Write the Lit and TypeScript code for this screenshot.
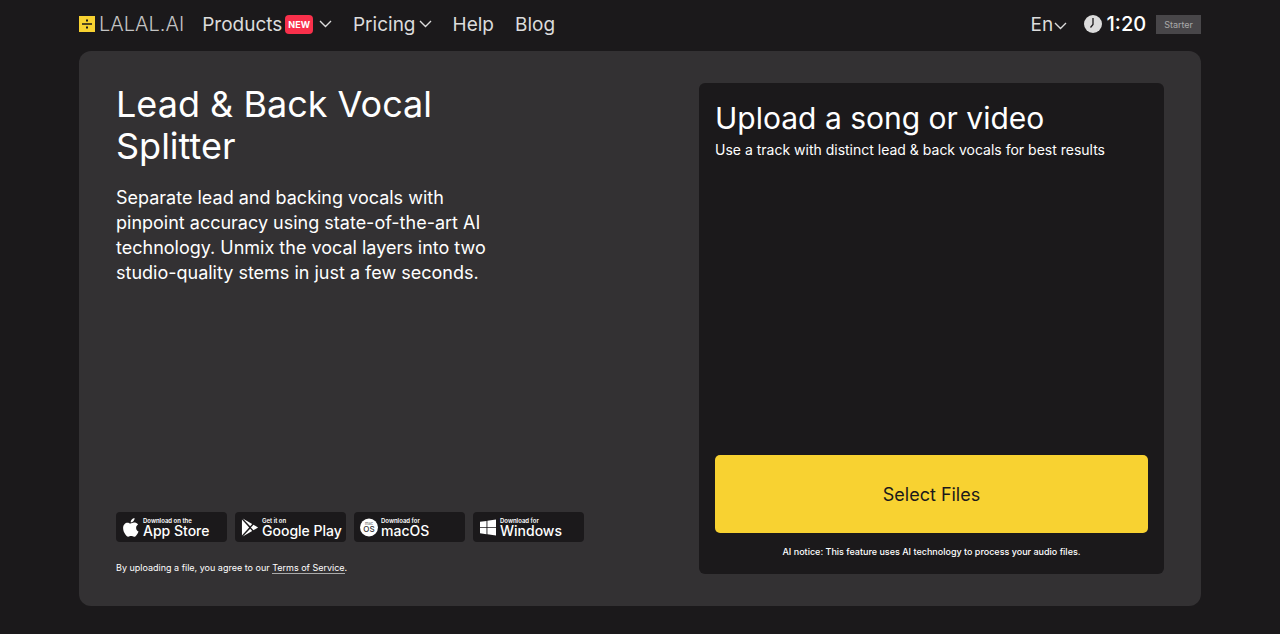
import { LitElement, html, css, svg } from "lit";
import { customElement } from "lit/decorators.js";

const chevron = html`<svg class="chevron" viewBox="0 0 13 8" aria-hidden="true"><path d="M1 1l5.5 5.5L12 1" fill="none" stroke="currentColor" stroke-width="1.4"/></svg>`;

const stores = [
  {
    small: "Download on the",
    name: "App Store",
    icon: svg`<path fill="currentColor" d="M12.2 0c.1 1.2-.3 2.300-1 3.200-.8.9-1.900 1.500-3 1.400-.1-1.100.4-2.300 1.100-3.100C10 .7 11.200.1 12.200 0zM15.900 6.900c-1.300.8-2 2-2 3.500 0 1.700.9 3 2.500 3.700-.4 1.200-1 2.300-1.800 3.400-.8 1.100-1.600 2.200-2.900 2.200-1.200 0-1.600-.7-3.100-.7-1.400 0-1.900.7-3.100.7s-2.100-1.100-2.900-2.300C.9 15 .2 12.700.2 10.500c0-3.500 2.300-5.600 4.700-5.600 1.300 0 2.300.8 3.200.8.800 0 2-.9 3.600-.9 1.700 0 3.200.7 4.200 2.100z"/>`,
    box: "0 0 17 20",
  },
  {
    small: "Get it on",
    name: "Google Play",
    icon: svg`<g fill="currentColor"><path d="M0 1.500v17l7.600-8.500z"/><path d="M.8.500l7.900 8.200 2.100-2.300zM.8 19.500l7.900-8.200 2.100 2.300z"/><path d="M12.100 7.100L9.500 10l2.600 2.900L17 10z"/></g>`,
    box: "0 0 17 20",
  },
  {
    small: "Download for",
    name: "macOS",
    icon: svg`<circle cx="9" cy="9" r="9" fill="currentColor"/><text x="9" y="6" text-anchor="middle" font-size="4" fill="#777">mac</text><text x="9" y="13" text-anchor="middle" font-size="8" font-weight="500" fill="#333">OS</text>`,
    box: "0 0 18 18",
  },
  {
    small: "Download for",
    name: "Windows",
    icon: svg`<path fill="currentColor" d="M0 2.300l6.500-.9v6.300H0zM7.400 1.300L16 0v7.700H7.400zM0 8.500h6.500v6.200L0 13.800zM7.400 8.500H16V16l-8.600-1.200z"/>`,
    box: "-1 -1 18 18",
  },
];

@customElement("app-root")
export class AppRoot extends LitElement {
  static styles = css`
    :host {
      display: block;
      box-sizing: border-box;
      min-height: 100vh;
      padding: 0 79px 28px;
      background: #1b191b;
      color: #fff;
      font-family: Inter, "Liberation Sans", sans-serif;
    }
    * { box-sizing: border-box; }
    h1, h2, p { margin: 0; font-weight: 400; }
    a { color: inherit; text-decoration: none; }
    button, select {
      margin: 0;
      padding: 0;
      border: 0;
      background: none;
      color: inherit;
      font: inherit;
      cursor: pointer;
    }
    select { appearance: none; }
    select option { color: #1b191b; }
    .header {
      display: flex;
      align-items: center;
      justify-content: space-between;
      height: 51px;
      padding-bottom: 3px;
      color: #dcdcdc;
      font-size: 19px;
    }
    .nav { display: flex; align-items: center; gap: 21px; }
    .logo {
      display: flex;
      align-items: center;
      gap: 4px;
      margin-right: -3px;
      font-size: 20px;
      font-weight: 300;
    }
    .logo svg { width: 16px; height: 16px; }
    .wordmark { color: #c4c4c4; }
    .item { display: flex; align-items: center; gap: 3px; }
    .chevron { width: 13px; height: 8px; }
    .new {
      padding: 0 3px;
      margin-right: 3px;
      border-radius: 4px;
      background: #f9304b;
      color: #fff;
      font-size: 9px;
      font-weight: 700;
      line-height: 19px;
    }
    .account { display: flex; align-items: center; }
    .lang { display: flex; align-items: center; }
    .lang .chevron { margin-top: 4px; }
    .time {
      display: flex;
      align-items: center;
      gap: 5px;
      margin: 0 10px 0 17px;
      color: #fff;
      font-size: 20px;
      font-weight: 500;
    }
    .time svg { width: 18px; height: 18px; }
    .plan {
      padding: 0 8px;
      background: #484649;
      color: #aaa;
      font-size: 9px;
      line-height: 19px;
    }
    .main {
      display: grid;
      grid-template-columns: 1fr 465px;
      gap: 36px;
      min-height: 555px;
      padding: 32px 37px;
      border-radius: 12px;
      background: #333133;
    }
    .intro { display: flex; flex-direction: column; }
    .title { max-width: 360px; font-size: 36px; line-height: 42px; }
    .lead {
      max-width: 400px;
      margin-top: 18px;
      font-size: 18px;
      line-height: 25px;
    }
    .stores { display: flex; gap: 8px; margin-top: auto; }
    .store {
      display: flex;
      align-items: center;
      gap: 3px;
      width: 111px;
      height: 30px;
      padding-left: 6px;
      border-radius: 4px;
      background: #1b191b;
      font-size: 14px;
      font-weight: 500;
      line-height: 14px;
      white-space: nowrap;
    }
    .store svg { width: 18px; height: 19px; flex: none; }
    .words { display: flex; flex-direction: column; }
    .small { font-size: 6px; font-weight: 600; line-height: 7px; }
    .terms { margin-top: 19px; font-size: 9px; line-height: 13px; }
    .link { border-bottom: 1px solid #aaa; }
    .upload {
      display: flex;
      flex-direction: column;
      padding: 16px;
      border-radius: 6px;
      background: #1b191b;
    }
    .heading { font-size: 30px; line-height: 38px; }
    .hint { font-size: 14px; line-height: 26px; }
    .select {
      height: 78px;
      margin-top: auto;
      border-radius: 5px;
      background: #f8d231;
      color: #1b191b;
      font-size: 18px;
    }
    .notice {
      margin-top: 12px;
      font-size: 9px;
      font-weight: 500;
      line-height: 13px;
      text-align: center;
    }
  `;

  render() {
    return html`
      <header class="header">
        <nav class="nav">
          <a class="logo" href="#">
            <svg viewBox="0 0 16 16" aria-hidden="true"><path fill="#f8d231" d="M0 0h16v16H0z"/><path fill="#1b191b" d="M3 7.300h10v1.500H3zM7 3.500h2v2H7zM7 10.500h2v2H7z"/></svg>
            <span class="wordmark">LALAL.AI</span>
          </a>
          <button class="item" type="button">Products<span class="new">NEW</span>${chevron}</button>
          <button class="item" type="button">Pricing${chevron}</button>
          <a href="#">Help</a>
          <a href="#">Blog</a>
        </nav>
        <div class="account">
          <label class="lang"><select aria-label="Language"><option>En</option></select>${chevron}</label>
          <span class="time">
            <svg viewBox="0 0 18 18" aria-hidden="true"><circle cx="9" cy="9" r="9" fill="#dcdcdc"/><path d="M9 3v6.500L6.500 12.500" fill="none" stroke="#1b191b" stroke-width="1.300"/></svg>1:20
          </span>
          <span class="plan">Starter</span>
        </div>
      </header>
      <main class="main">
        <section class="intro">
          <h1 class="title">Lead &amp; Back Vocal Splitter</h1>
          <p class="lead">Separate lead and backing vocals with pinpoint accuracy using state-of-the-art AI technology. Unmix the vocal layers into two studio-quality stems in just a few seconds.</p>
          <div class="stores">
            ${stores.map(
              (s) => html`<a class="store" href="#">
                <svg viewBox=${s.box} aria-hidden="true">${s.icon}</svg>
                <span class="words"><span class="small">${s.small}</span><span>${s.name}</span></span>
              </a>`
            )}
          </div>
          <p class="terms">By uploading a file, you agree to our <a class="link" href="#">Terms of Service</a>.</p>
        </section>
        <section class="upload">
          <h2 class="heading">Upload a song or video</h2>
          <p class="hint">Use a track with distinct lead &amp; back vocals for best results</p>
          <button class="select" type="button">Select Files</button>
          <p class="notice">AI notice: This feature uses AI technology to process your audio files.</p>
        </section>
      </main>
    `;
  }
}
